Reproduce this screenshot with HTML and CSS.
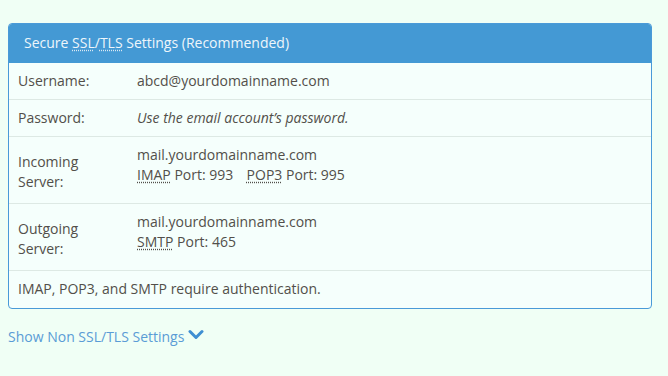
FILE: index.html
```html
<!DOCTYPE html>
<html lang="en">
<head>
    <meta charset="UTF-8">
    <title>Email Client Settings</title>
    <link rel="stylesheet" href="styles.css">
</head>
<body>
    <div class="settings-panel">
        <div class="panel-heading">
            Secure <abbr title="Secure Sockets Layer">SSL</abbr>/<abbr title="Transport Layer Security">TLS</abbr> Settings (Recommended)
        </div>
        <div class="setting-row">
            <div class="label">Username:</div>
            <div class="value">abcd@yourdomainname.com</div>
        </div>
        <div class="setting-row">
            <div class="label">Password:</div>
            <div class="value"><em>Use the email account’s password.</em></div>
        </div>
        <div class="setting-row multi">
            <div class="label">Incoming<br>Server:</div>
            <div class="value">
                mail.yourdomainname.com<br>
                <abbr title="Internet Message Access Protocol">IMAP</abbr> Port: 993
                <span class="port-gap"></span>
                <abbr title="Post Office Protocol 3">POP3</abbr> Port: 995
            </div>
        </div>
        <div class="setting-row multi">
            <div class="label">Outgoing<br>Server:</div>
            <div class="value">
                mail.yourdomainname.com<br>
                <abbr title="Simple Mail Transfer Protocol">SMTP</abbr> Port: 465
            </div>
        </div>
        <div class="setting-row note">
            IMAP, POP3, and SMTP require authentication.
        </div>
    </div>

    <a class="toggle-link" href="#">Show Non SSL/TLS Settings
        <svg class="chevron" viewBox="0 0 16 12" width="16" height="12"><path d="M2 2.5 8 8.5 14 2.5" fill="none" stroke="#3f8fd2" stroke-width="3" stroke-linecap="round" stroke-linejoin="round"/></svg>
    </a>
</body>
</html>
```
FILE: styles.css
```css
body {
    font-family: 'Open Sans', 'Liberation Sans', sans-serif;
    font-size: 14px;
    line-height: 20px;
    margin: 0;
    padding: 23px 16px 0 8px;
    background-color: #f0fff5;
    color: #524f4a;
}
.settings-panel {
    background-color: #f5fffc;
    border: 1px solid #4a9ad8;
    border-radius: 4px;
    overflow: hidden;
}
.panel-heading {
    background-color: #4499d4;
    color: #eef6fb;
    padding: 10px 16px 10px;
    margin: -1px -1px 0;
}
abbr {
    text-decoration: underline dotted;
    text-underline-offset: 2px;
}
.panel-heading abbr {
    text-decoration-color: #dbe9f3;
}
.setting-row {
    display: grid;
    grid-template-columns: 119px 1fr;
    align-items: center;
    padding: 8px 9px;
    border-top: 1px solid #dde9e4;
}
.setting-row:nth-child(2) {
    border-top: none;
}
.setting-row.multi {
    min-height: 48px;
}
.setting-row.multi .label {
    padding-top: 4px;
}
.setting-row.multi .value {
    padding-bottom: 10px;
    align-self: start;
}
.setting-row.note {
    display: block;
    padding-bottom: 9px;
}
.port-gap {
    display: inline-block;
    width: 6px;
}
.toggle-link {
    display: inline-block;
    margin-top: 18px;
    color: #5a9cd6;
    text-decoration: none;
}
.chevron {
    vertical-align: 1px;
}
```
